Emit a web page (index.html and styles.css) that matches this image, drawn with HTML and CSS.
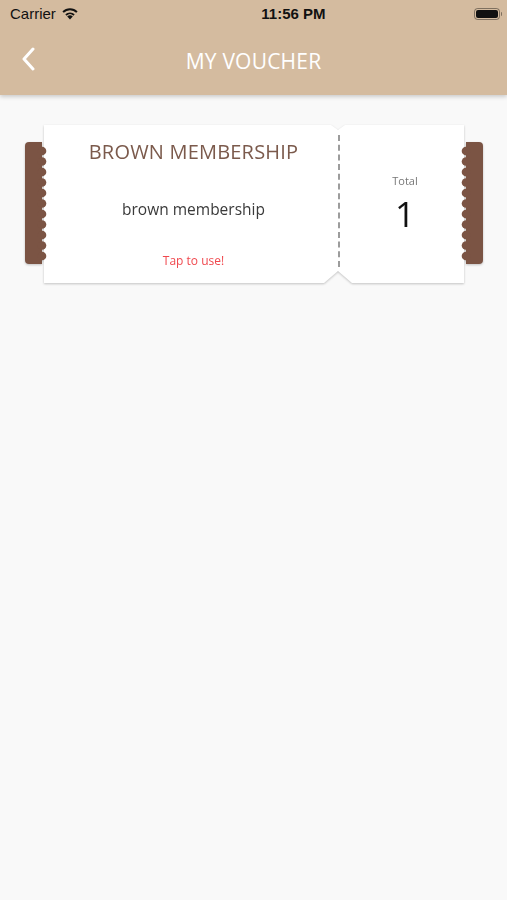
FILE: index.html
```html
<!DOCTYPE html>
<html lang="en">
<head>
  <meta charset="UTF-8" />
  <meta name="viewport" content="width=device-width, initial-scale=1.0"/>
  <title>My Voucher</title>
  <link rel="stylesheet" href="styles.css">
</head>
<body>

  <header class="topbar">
    <div class="status">
      <span class="carrier">Carrier
        <svg class="wifi" width="18" height="13" viewBox="0 0 18 13">
          <path d="M9 12.5 L6.2 9.4 A4.2 4.2 0 0 1 11.8 9.4 Z" fill="#111"/>
          <path d="M4.3 7.3 A6.8 6.8 0 0 1 13.7 7.3 L12.4 8.7 A5 5 0 0 0 5.6 8.7 Z" fill="#111"/>
          <path d="M1.4 4.4 A10.8 10.8 0 0 1 16.6 4.4 L15.2 5.8 A8.9 8.9 0 0 0 2.8 5.8 Z" fill="#111"/>
        </svg>
      </span>
      <span class="clock">11:56 PM</span>
      <span class="battery"><span class="battery-fill"></span></span>
    </div>
    <nav class="navbar">
      <svg class="back" width="14" height="24" viewBox="0 0 14 24">
        <path d="M12 2 L3 12 L12 22" fill="none" stroke="#fff" stroke-width="3" stroke-linecap="round" stroke-linejoin="round"/>
      </svg>
      <h1>MY VOUCHER</h1>
    </nav>
  </header>

  <main class="list">
    <div class="voucher">
      <div class="ticket">
        <div class="ticket-main">
          <h2>BROWN MEMBERSHIP</h2>
          <p class="ticket-name">brown membership</p>
          <p class="ticket-tap">Tap to use!</p>
        </div>
        <div class="ticket-side">
          <span class="total-label">Total</span>
          <span class="total-count">1</span>
        </div>
      </div>

      <!-- brown stubs on both ends -->
      <svg class="stub stub-left" width="22" height="122" viewBox="0 0 22 122">
        <path d="M4 0 H17 V122 H4 A4 4 0 0 1 0 118 V4 A4 4 0 0 1 4 0 Z" fill="#7b5444"/>
        <g fill="#7b5444">
          <circle cx="17" cy="9" r="4.3"/><circle cx="17" cy="19.5" r="4.3"/><circle cx="17" cy="30" r="4.3"/>
          <circle cx="17" cy="40.5" r="4.3"/><circle cx="17" cy="51" r="4.3"/><circle cx="17" cy="61.5" r="4.3"/>
          <circle cx="17" cy="72" r="4.3"/><circle cx="17" cy="82.5" r="4.3"/><circle cx="17" cy="93" r="4.3"/>
          <circle cx="17" cy="103.5" r="4.3"/><circle cx="17" cy="114" r="4.3"/>
        </g>
      </svg>
      <svg class="stub stub-right" width="22" height="122" viewBox="0 0 22 122">
        <path d="M5 0 H18 A4 4 0 0 1 22 4 V118 A4 4 0 0 1 18 122 H5 Z" fill="#7b5444"/>
        <g fill="#7b5444">
          <circle cx="5" cy="9" r="4.3"/><circle cx="5" cy="19.5" r="4.3"/><circle cx="5" cy="30" r="4.3"/>
          <circle cx="5" cy="40.5" r="4.3"/><circle cx="5" cy="51" r="4.3"/><circle cx="5" cy="61.5" r="4.3"/>
          <circle cx="5" cy="72" r="4.3"/><circle cx="5" cy="82.5" r="4.3"/><circle cx="5" cy="93" r="4.3"/>
          <circle cx="5" cy="103.5" r="4.3"/><circle cx="5" cy="114" r="4.3"/>
        </g>
      </svg>
    </div>
  </main>

</body>
</html>
```

FILE: styles.css
```css
* { margin: 0; padding: 0; box-sizing: border-box; }

html, body {
  height: 100%;
  overflow: hidden;
}

body {
  font-family: 'Open Sans', 'Noto Sans', sans-serif;
  background: #f9f9f9;
}

.topbar {
  background: #d4bb9f;
  height: 95px;
  box-shadow: 0 2px 4px rgba(0, 0, 0, 0.18);
  position: relative;
  z-index: 2;
}

.status {
  height: 27px;
  display: flex;
  align-items: center;
  justify-content: space-between;
  padding: 0 7px 0 10px;
  font-family: 'Liberation Sans', Arial, sans-serif;
  font-size: 15px;
  color: #111;
}

.carrier {
  display: flex;
  align-items: center;
  gap: 5px;
}

.clock {
  font-weight: bold;
  margin-left: 34px;
}

.battery {
  width: 26px;
  height: 12px;
  border: 1px solid rgba(0, 0, 0, 0.4);
  border-radius: 3.5px;
  padding: 1px;
  position: relative;
}

.battery::after {
  content: '';
  position: absolute;
  right: -3px;
  top: 3px;
  width: 1.5px;
  height: 4px;
  background: rgba(0, 0, 0, 0.4);
  border-radius: 0 1px 1px 0;
}

.battery-fill {
  display: block;
  height: 100%;
  background: #111;
  border-radius: 2px;
}

.navbar {
  height: 68px;
  display: flex;
  align-items: center;
  justify-content: center;
  position: relative;
}

.back {
  position: absolute;
  left: 21px;
  top: 20px;
}

.navbar h1 {
  font-weight: normal;
  font-size: 21px;
  color: #fff;
  letter-spacing: 0.2px;
}

.list {
  padding-top: 30px;
}

.voucher {
  position: relative;
  margin-left: 44px;
  width: 420px;
  height: 158px;
  filter: drop-shadow(0 1.5px 1px rgba(0, 0, 0, 0.22));
}

.ticket {
  display: flex;
  height: 100%;
  background: #fff;
  clip-path: polygon(0 0, 287px 0, 294px 5px, 301px 0, 100% 0, 100% 100%, 308px 100%, 294px 146px, 280px 100%, 0 100%);
}

.ticket-main {
  width: 294px;
  padding-left: 5px;
  display: flex;
  flex-direction: column;
  align-items: center;
  text-align: center;
}

.ticket-main h2 {
  font-weight: normal;
  font-size: 20px;
  line-height: 27px;
  color: #7b5a4c;
  margin-top: 13px;
  letter-spacing: 0.2px;
}

.ticket-name {
  font-size: 15.5px;
  line-height: 21px;
  color: #3a3a3a;
  margin-top: 34px;
}

.ticket-tap {
  font-size: 12px;
  line-height: 16px;
  color: #f0484e;
  margin-top: 33px;
}

.ticket-side {
  flex: 1;
  display: flex;
  flex-direction: column;
  align-items: center;
  margin: 10px 0 16px;
  border-left: 2px dashed #9c9c9c;
  padding: 39px 0 0 6px;
}

.total-label {
  font-size: 11px;
  line-height: 14px;
  color: #777;
}

.total-count {
  font-size: 35px;
  line-height: 36px;
  color: #111;
  margin-top: 8px;
}

.stub {
  position: absolute;
  top: 17px;
}

.stub-left { left: -19px; }
.stub-right { right: -19px; }
```
